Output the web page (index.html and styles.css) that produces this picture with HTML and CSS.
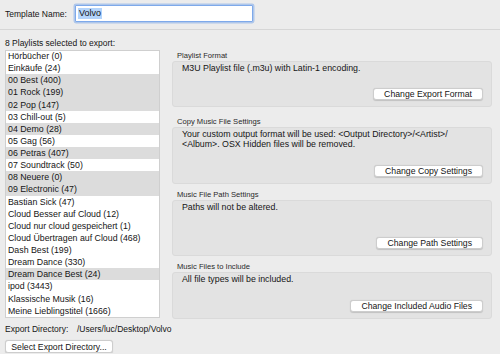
FILE: index.html
```html
<!DOCTYPE html>
<html lang="de">
<head>
	<meta charset="UTF-8">
	<meta name="viewport" content="width=device-width, initial-scale=1.0">
	<title>Playlist Export</title>
	<link rel="stylesheet" href="styles.css">
</head>
<body>
<!-- Vorlagenname -->
<div class="header">
	<label class="field-label">Template Name:</label>
	<div class="text-field"><span class="selection">Volvo</span></div>
</div>

<div class="main">
	<p class="list-title">8 Playlists selected to export:</p>

	<!-- Playlist-Liste -->
	<div class="playlist-box">
		<div class="playlist-rows">
			<div class="row">Hörbücher (0)</div>
			<div class="row">Einkäufe (24)</div>
			<div class="row selected">00 Best (400)</div>
			<div class="row selected">01 Rock (199)</div>
			<div class="row selected">02 Pop (147)</div>
			<div class="row">03 Chill-out (5)</div>
			<div class="row selected">04 Demo (28)</div>
			<div class="row">05 Gag (56)</div>
			<div class="row selected">06 Petras (407)</div>
			<div class="row">07 Soundtrack (50)</div>
			<div class="row selected">08 Neuere (0)</div>
			<div class="row selected">09 Electronic (47)</div>
			<div class="row">Bastian Sick (47)</div>
			<div class="row">Cloud Besser auf Cloud (12)</div>
			<div class="row">Cloud nur cloud gespeichert (1)</div>
			<div class="row">Cloud Übertragen auf Cloud (468)</div>
			<div class="row">Dash Best (199)</div>
			<div class="row">Dream Dance (330)</div>
			<div class="row selected">Dream Dance Best (24)</div>
			<div class="row">ipod (3443)</div>
			<div class="row">Klassische Musik (16)</div>
			<div class="row">Meine Lieblingstitel (1666)</div>
		</div>
	</div>

	<!-- Einstellungen -->
	<div class="settings">
		<div class="group">
			<div class="group-label">Playlist Format</div>
			<div class="group-box box-format">
				<p>M3U Playlist file (.m3u) with Latin-1 encoding.</p>
				<button class="push-button">Change Export Format</button>
			</div>
		</div>
		<div class="group group-copy">
			<div class="group-label">Copy Music File Settings</div>
			<div class="group-box box-copy">
				<p>Your custom output format will be used: &lt;Output Directory&gt;/&lt;Artist&gt;/<br>&lt;Album&gt;. OSX Hidden files will be removed.</p>
				<button class="push-button">Change Copy Settings</button>
			</div>
		</div>
		<div class="group">
			<div class="group-label">Music File Path Settings</div>
			<div class="group-box box-path">
				<p>Paths will not be altered.</p>
				<button class="push-button">Change Path Settings</button>
			</div>
		</div>
		<div class="group">
			<div class="group-label">Music Files to Include</div>
			<div class="group-box box-include">
				<p>All file types will be included.</p>
				<button class="push-button">Change Included Audio Files</button>
			</div>
		</div>
	</div>
</div>

<!-- Exportverzeichnis -->
<div class="export">
	<div class="export-row">
		<span class="export-label">Export Directory:</span>
		<span class="export-path">/Users/luc/Desktop/Volvo</span>
	</div>
	<button class="push-button">Select Export Directory...</button>
</div>
</body>
</html>
```

FILE: styles.css
```css
body {
	margin: 0;
	background-color: #ececec;
	font-family: "Liberation Sans", Arial, sans-serif;
	font-size: 8.8px;
	color: #151515;
}
p {
	margin: 0;
}
.header {
	display: flex;
	align-items: center;
	height: 17px;
	padding: 5px 5px 7px;
	border-bottom: 1px solid #d6d6d6;
}
.field-label {
	width: 70px;
	font-size: 8.5px;
}
.text-field {
	width: 174px;
	height: 15px;
	display: flex;
	align-items: center;
	padding-left: 2px;
	background-color: #fff;
	border: 1px solid #7ea9ea;
	box-shadow: 0 0 0 1.5px rgba(126, 169, 234, 0.55);
	border-radius: 1px;
	font-size: 9px;
}
.selection {
	background-color: #b4d4fb;
	padding: 0 1px;
	line-height: 11px;
}
.main {
	display: grid;
	grid-template-columns: 155px 1fr;
	grid-template-areas:
		"title ."
		"list settings";
	column-gap: 12px;
	padding: 0 8px 0 5px;
}
.list-title {
	grid-area: title;
	margin: 7px 0 1px;
	line-height: 12px;
	font-size: 8.5px;
}
.playlist-box {
	grid-area: list;
	height: 266px;
	background-color: #fff;
	border: 1px solid #cfcfcf;
	overflow: hidden;
}
.playlist-rows {
	margin-top: -1px;
}
.row {
	height: 12.14px;
	line-height: 12.14px;
	padding-left: 2px;
	white-space: nowrap;
}
.row.selected {
	background-color: #dcdcdc;
}
.settings {
	grid-area: settings;
	display: flex;
	flex-direction: column;
}
.group + .group {
	margin-top: 5px;
}
.group.group-copy {
	margin-top: 9px;
}
.group-label {
	font-size: 7.6px;
	line-height: 11px;
	padding-left: 5px;
	color: #2a2a2a;
}
.group-box {
	box-sizing: border-box;
	display: flex;
	flex-direction: column;
	padding: 1px 8px 6px 9px;
	background-color: #e3e3e3;
	border: 1px solid #dadada;
	border-radius: 3px;
}
.group-box p {
	line-height: 10px;
}
.box-format {
	height: 46px;
}
.box-copy {
	height: 57px;
}
.box-path {
	height: 56px;
}
.box-include {
	height: 47px;
}
.push-button {
	height: 12px;
	padding: 0 10px;
	font-family: "Liberation Sans", Arial, sans-serif;
	font-size: 8.7px;
	line-height: 10px;
	color: #151515;
	background-color: #fff;
	border: 1px solid #cdcdcd;
	border-radius: 3px;
	box-shadow: 0 0.5px 1px rgba(0, 0, 0, 0.15);
}
.group-box .push-button {
	margin-top: auto;
	align-self: flex-end;
}
.export {
	padding: 4px 5px 0;
}
.export-row {
	display: flex;
	line-height: 12px;
	font-size: 8.5px;
	margin-bottom: 5px;
}
.export-label {
	width: 72px;
}
.export .push-button {
	width: 108px;
	height: 13px;
	padding: 0;
}
```
